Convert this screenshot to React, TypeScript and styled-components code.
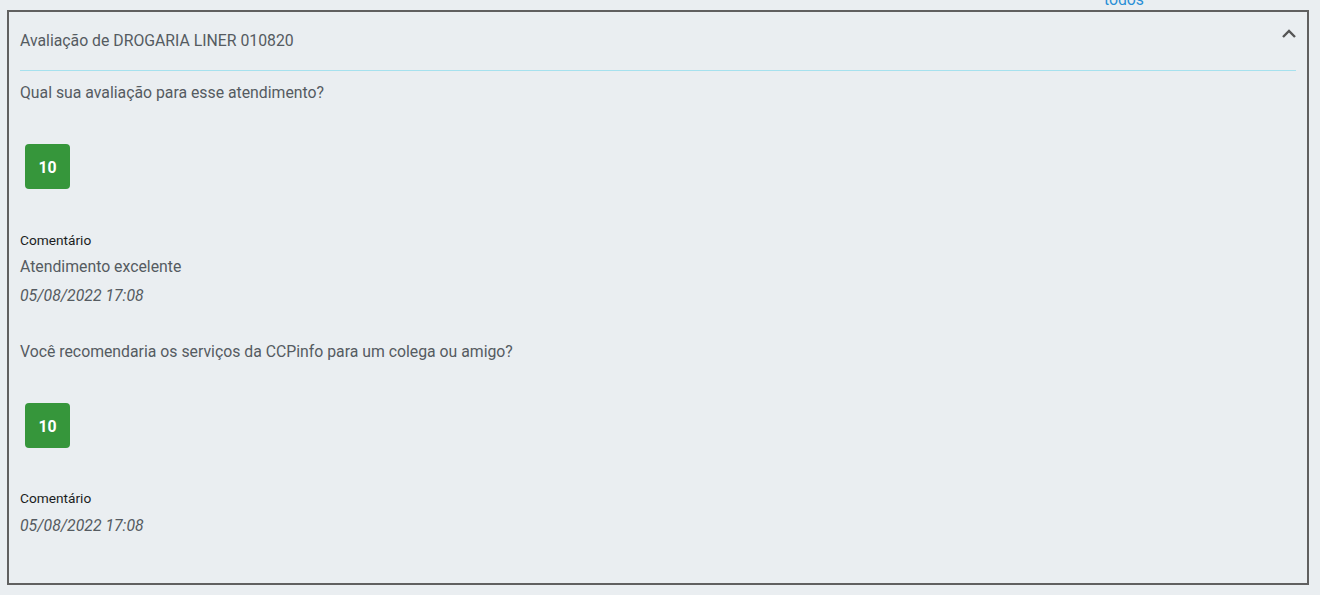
import React from "react";
import styled, { createGlobalStyle } from "styled-components";

const Global = createGlobalStyle`
  html, body { margin: 0; padding: 0; background: #eaeef1; }
  body { font-family: Roboto, "Liberation Sans", Arial, sans-serif; }
  * { box-sizing: border-box; }
`;

const Page = styled.div`
  width: 1320px;
  height: 595px;
  overflow: hidden;
  background: #eaeef1;
`;

const TopBar = styled.div`
  height: 10px;
  display: flex;
  justify-content: flex-end;
  padding-right: 176px;
`;

const TopLink = styled.a`
  font-size: 15.8px;
  line-height: 20px;
  height: 20px;
  color: #2a8fd6;
  margin-top: -10px;
  text-decoration: none;
`;

const Card = styled.section`
  margin: 0 11px 0 7px;
  height: 575px;
  border: 2px solid #606060;
  padding: 0 11px;
`;

const Header = styled.div`
  display: flex;
  align-items: center;
  justify-content: space-between;
  padding: 19px 0 19px;
  border-bottom: 1px solid #a6e1ee;
`;

const Title = styled.h2`
  margin: 0;
  font-size: 15.8px;
  line-height: 20px;
  font-weight: 400;
  color: #555b61;
`;

const Chevron = styled.svg`
  width: 16px;
  height: 16px;
  margin-top: -15px;
  margin-right: -1px;
`;

const Question = styled.p<{ $top: number }>`
  margin: ${(p) => p.$top}px 0 0;
  font-size: 15.8px;
  line-height: 20px;
  color: #555b61;
`;

const Score = styled.div`
  margin: 41px 0 0 5px;
  width: 45px;
  height: 45px;
  border-radius: 4px;
  background: #36963b;
  color: #fff;
  font-weight: 700;
  font-size: 15.8px;
  display: flex;
  align-items: center;
  justify-content: center;
  padding-top: 1px;
`;

const Label = styled.div<{ $top: number }>`
  margin-top: ${(p) => p.$top}px;
  font-size: 13.7px;
  line-height: 18px;
  color: #1a1d21;
`;

const Text = styled.div<{ $top: number }>`
  margin-top: ${(p) => p.$top}px;
  font-size: 15.8px;
  line-height: 20px;
  color: #555b61;
`;

const DateText = styled(Text)`
  font-style: italic;
`;

export default function App() {
  return (
    <Page>
      <Global />
      <TopBar>
        <TopLink href="#">todos</TopLink>
      </TopBar>
      <Card>
        <Header>
          <Title>Avaliação de DROGARIA LINER 010820</Title>
          <Chevron viewBox="0 0 16 16" fill="none">
            <path d="M2 11 L8 5 L14 11" stroke="#555" strokeWidth="2.4" strokeLinecap="butt" strokeLinejoin="miter" />
          </Chevron>
        </Header>
        <Question $top={12}>Qual sua avaliação para esse atendimento?</Question>
        <Score>10</Score>
        <Label $top={42}>Comentário</Label>
        <Text $top={8}>Atendimento excelente</Text>
        <DateText $top={9}>05/08/2022 17:08</DateText>
        <Question $top={36}>Você recomendaria os serviços da CCPinfo para um colega ou amigo?</Question>
        <Score>10</Score>
        <Label $top={41}>Comentário</Label>
        <DateText $top={9}>05/08/2022 17:08</DateText>
      </Card>
    </Page>
  );
}
